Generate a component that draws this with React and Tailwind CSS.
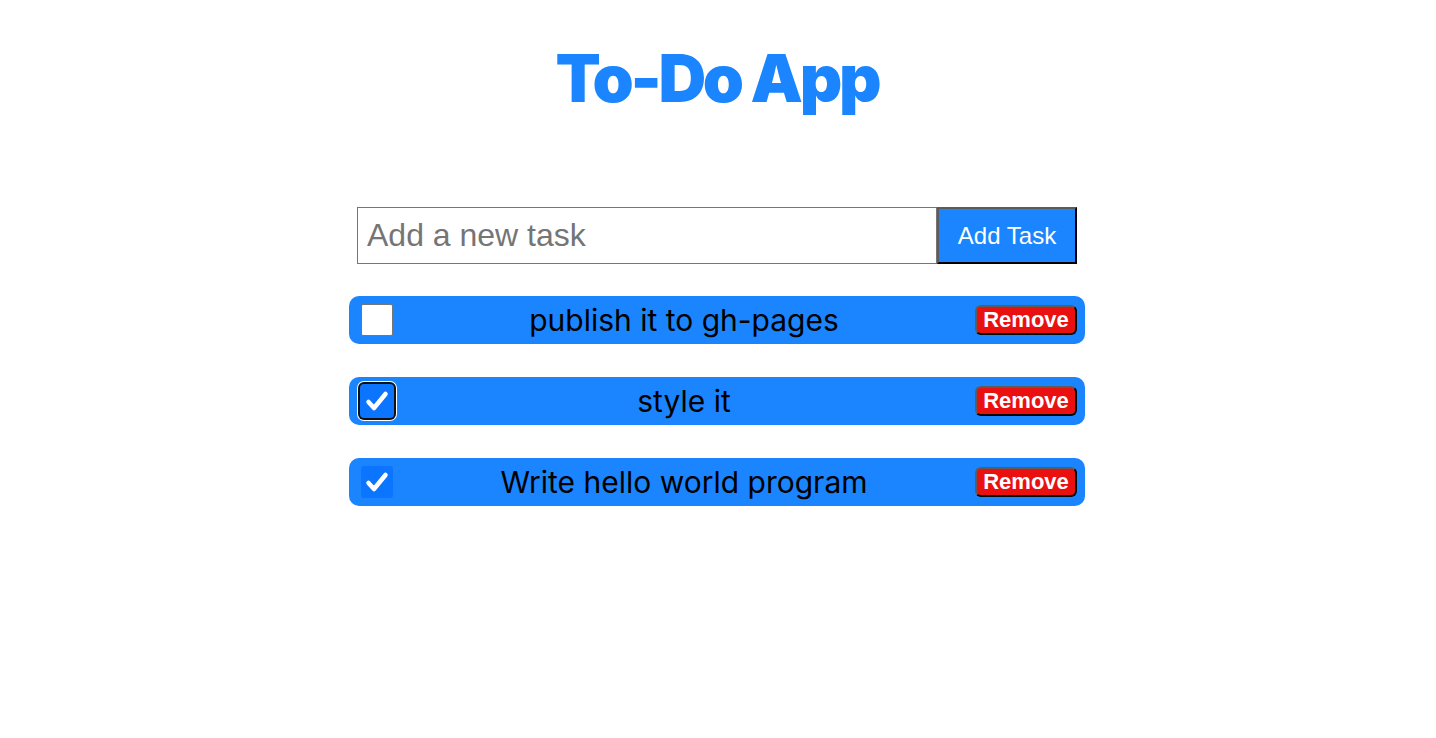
import { useState } from "react";

const INITIAL = [
  { id: 3, text: "publish it to gh-pages", done: false },
  { id: 2, text: "style it", done: true, focused: true },
  { id: 1, text: "Write hello world program", done: true },
];

function CheckBox({ checked, focused }) {
  if (!checked) {
    return <span className="block w-8 h-8 shrink-0 bg-white border border-[#767676] rounded-[2px]" />;
  }
  return (
    <span
      className={`flex items-center justify-center w-8 h-8 shrink-0 bg-[#0b75ff] rounded-[3px] ${
        focused ? "shadow-[0_0_0_1px_#0b75ff,0_0_0_3px_#101010,0_0_0_4px_#ffffff]" : ""
      }`}
    >
      <svg viewBox="0 0 32 32" className="w-8 h-8">
        <path d="M7.5 17 L13 23 L24.5 9" fill="none" stroke="#fff" strokeWidth="4.5" strokeLinecap="round" strokeLinejoin="round" />
      </svg>
    </span>
  );
}

function TaskRow({ task, onToggle, onRemove }) {
  return (
    <li className="flex items-center h-[48px] pl-3 pr-2 rounded-[10px] bg-[#1a85ff]">
      <button type="button" onClick={onToggle} className="cursor-pointer">
        <CheckBox checked={task.done} focused={task.focused} />
      </button>
      <span className="flex-1 text-center text-[30px] leading-none text-black font-['Inter',sans-serif]">{task.text}</span>
      <button
        type="button"
        onClick={onRemove}
        className="w-[102px] h-[30px] rounded-[6px] bg-[#eb1010] border-2 border-t-[#5c5c5c] border-l-[#5c5c5c] border-r-black border-b-black text-white font-bold text-[22px] leading-none font-['Liberation_Sans',Arial,sans-serif]"
      >
        Remove
      </button>
    </li>
  );
}

export default function App() {
  const [tasks, setTasks] = useState(INITIAL);
  const [draft, setDraft] = useState("");

  const addTask = (e) => {
    e.preventDefault();
    if (!draft.trim()) return;
    setTasks([{ id: Date.now(), text: draft.trim(), done: false }, ...tasks]);
    setDraft("");
  };

  return (
    <div className="min-h-screen bg-white pt-[45px] pr-[2px]">
      <h1 className="text-center text-[66px] leading-none font-black tracking-[-0.05em] text-[#1a85ff] font-['Inter',sans-serif]">
        To-Do App
      </h1>

      <div className="w-[736px] mx-auto mt-[96px]">
        <form onSubmit={addTask} className="flex justify-center">
          <input
            value={draft}
            onChange={(e) => setDraft(e.target.value)}
            placeholder="Add a new task"
            className="w-[580px] h-[57px] pl-[9px] pr-[10px] border border-[#767676] text-[32px] text-black placeholder:text-[#757575] outline-none font-['Liberation_Sans',Arial,sans-serif]"
          />
          <button
            type="submit"
            className="w-[140px] h-[57px] bg-[#1a85ff] border-2 border-t-[#5c5c5c] border-l-[#5c5c5c] border-r-black border-b-black text-white text-[24px] font-['Liberation_Sans',Arial,sans-serif]"
          >
            Add Task
          </button>
        </form>

        <ul className="flex flex-col gap-[33px] mt-[32px]">
          {tasks.map((t) => (
            <TaskRow
              key={t.id}
              task={t}
              onToggle={() => setTasks(tasks.map((x) => (x.id === t.id ? { ...x, done: !x.done } : x)))}
              onRemove={() => setTasks(tasks.filter((x) => x.id !== t.id))}
            />
          ))}
        </ul>
      </div>
    </div>
  );
}
